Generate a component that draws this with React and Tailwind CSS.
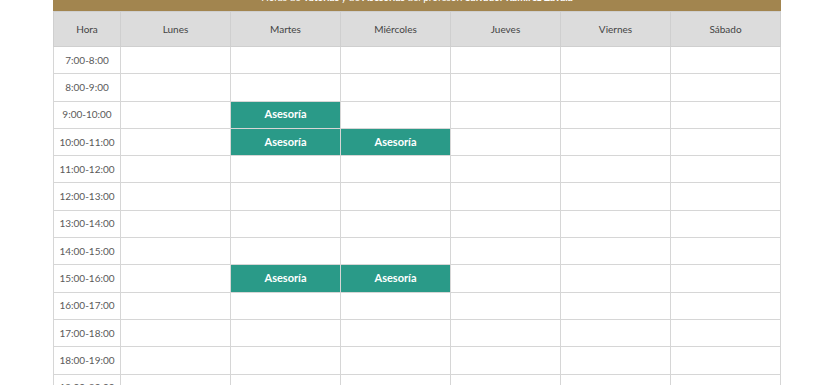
const days = ["Lunes", "Martes", "Miércoles", "Jueves", "Viernes", "Sábado"];

const hours = [
  "7:00-8:00",
  "8:00-9:00",
  "9:00-10:00",
  "10:00-11:00",
  "11:00-12:00",
  "12:00-13:00",
  "13:00-14:00",
  "14:00-15:00",
  "15:00-16:00",
  "16:00-17:00",
  "17:00-18:00",
  "18:00-19:00",
  "19:00-20:00",
];

// hour index -> day index with asesoría
const slots = {
  2: [1],
  3: [1, 2],
  8: [1, 2],
};

export default function App() {
  return (
    <div className="w-[840px] h-[385px] overflow-hidden bg-white font-['Lato','Open_Sans',sans-serif]">
      <div className="mx-[53px] w-[728px]">
        <div className="h-[11px] overflow-hidden bg-[#a2854f] text-center text-[10px] leading-[11px] text-white">
          <p className="-mt-[8px]">
            Horas de <b>Tutorías</b> y de <b>Asesorías</b> del profesor: <b>Salvador Ramírez Zavala</b>
          </p>
        </div>
        <table className="w-full table-fixed border-collapse text-[10px] text-[#5a5a5a]">
          <colgroup>
            <col className="w-[67px]" />
            {days.map((d) => (
              <col key={d} className="w-[110px]" />
            ))}
          </colgroup>
          <thead>
            <tr className="h-[35px] bg-[#dcdcdc]">
              <th className="border border-[#cfcfcf] font-normal text-[#444]">Hora</th>
              {days.map((d) => (
                <th key={d} className="border border-[#cfcfcf] font-normal text-[#444]">
                  {d}
                </th>
              ))}
            </tr>
          </thead>
          <tbody>
            {hours.map((h, i) => (
              <tr key={h} className="h-[27.3px]">
                <td className="border border-[#d6d6d6] text-center">{h}</td>
                {days.map((d, j) =>
                  slots[i] && slots[i].includes(j) ? (
                    <td
                      key={d}
                      className="border border-[#d6d6d6] bg-[#2a9a88] text-center text-[11px] font-bold text-white"
                    >
                      Asesoría
                    </td>
                  ) : (
                    <td key={d} className="border border-[#d6d6d6]"></td>
                  )
                )}
              </tr>
            ))}
          </tbody>
        </table>
      </div>
    </div>
  );
}
